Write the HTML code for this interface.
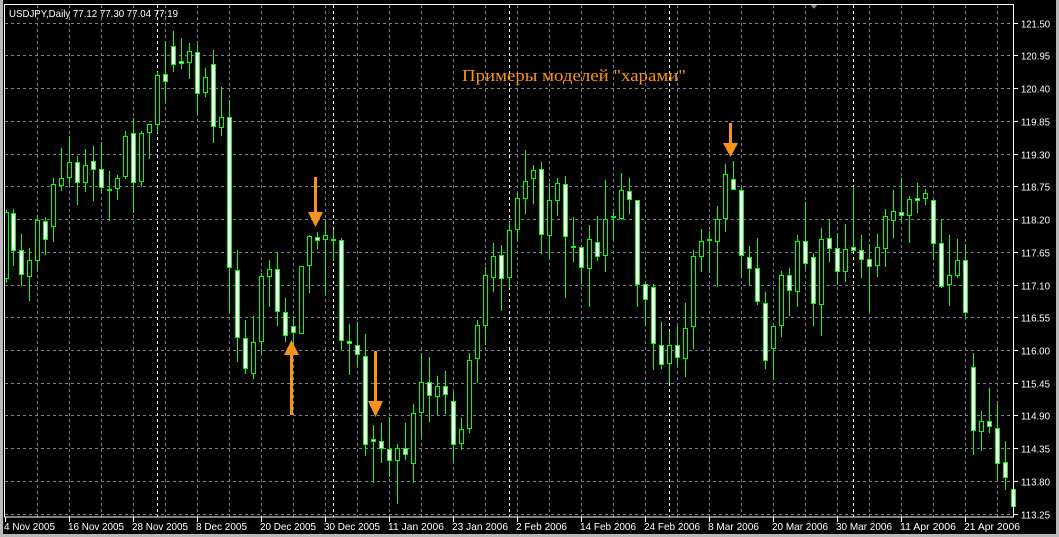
<!DOCTYPE html>
<html><head><meta charset="utf-8"><style>
html,body{margin:0;padding:0;background:#000;width:1059px;height:537px;overflow:hidden}
svg{display:block}
text{font-family:"Liberation Sans",sans-serif;font-size:10.5px;fill:#fff}
</style></head><body>
<svg id="s" width="1059" height="537" xmlns="http://www.w3.org/2000/svg" shape-rendering="crispEdges">
<rect width="1059" height="537" fill="#000"/>
<g id="grid"></g>
<g id="c"></g>
<g fill="#f7941d">
<rect x="314" y="177" width="3" height="36"/><polygon points="308,212 323,212 315.5,227"/>
<rect x="290" y="355" width="3" height="60"/><polygon points="284,355 299,355 291.5,340"/>
<rect x="374" y="351" width="3" height="50"/><polygon points="368,401 383,401 375.5,417"/>
<rect x="729" y="123" width="3" height="20"/><polygon points="723,143 738,143 730.5,157"/>
</g>
<text x="462" y="81" textLength="224" lengthAdjust="spacingAndGlyphs" style="font-family:'Liberation Serif',serif;font-size:17px;fill:#f7941d">Примеры моделей "харами"</text>
<text x="9" y="17" textLength="169" lengthAdjust="spacingAndGlyphs">USDJPY,Daily  77.12 77.30 77.04 77.19</text>
<polygon points="810,4 818,4 814,9" fill="#888"/>
<g id="ax"></g>
</svg>
<script>
var NS="http://www.w3.org/2000/svg";
function el(p,t,a,txt){var e=document.createElementNS(NS,t);for(var k in a)e.setAttribute(k,a[k]);if(txt)e.textContent=txt;p.appendChild(e);return e;}
var g=document.getElementById('grid'),c=document.getElementById('c'),ax=document.getElementById('ax');
var prices=["121.50","120.95","120.40","119.85","119.30","118.75","118.20","117.65","117.10","116.55","116.00","115.45","114.90","114.35","113.80","113.25"];
for(var k=0;k<16;k++){var y=Math.round(22.7+32.73*k)+0.5;
 el(g,'line',{x1:5,x2:1014,y1:y,y2:y,stroke:'#7a8290','stroke-dasharray':'3,3'});
 el(ax,'line',{x1:1014,x2:1018,y1:y,y2:y,stroke:'#fff'});
 el(ax,'text',{x:1021,y:y+4,textLength:29,lengthAdjust:'spacingAndGlyphs'},prices[k]);}
for(var x=37;x<1014;x+=32){el(g,'line',{x1:x+.5,x2:x+.5,y1:5,y2:517,stroke:'#7a8290','stroke-dasharray':'3,3'});}
[157,333,509,669,853,1013].forEach(function(x){el(g,'line',{x1:x+.5,x2:x+.5,y1:5,y2:517,stroke:'#fff','stroke-dasharray':'3,3'});});
el(ax,'rect',{x:4.5,y:4.5,width:1009,height:512.5,fill:'none',stroke:'#fff'});
el(ax,'rect',{x:0,y:534,width:1059,height:3,fill:'#b8b8b8'});
el(ax,'rect',{x:1056,y:0,width:3,height:537,fill:'#b8b8b8'});
el(ax,'rect',{x:0,y:0,width:3,height:537,fill:'#b8b8b8'});
var dates=["4 Nov 2005","16 Nov 2005","28 Nov 2005","8 Dec 2005","20 Dec 2005","30 Dec 2005","11 Jan 2006","23 Jan 2006","2 Feb 2006","14 Feb 2006","24 Feb 2006","8 Mar 2006","20 Mar 2006","30 Mar 2006","11 Apr 2006","21 Apr 2006"];
dates.forEach(function(d,i){var x=5+64*i;el(ax,'line',{x1:x+.5,x2:x+.5,y1:517,y2:522,stroke:'#fff'});
 var w=d.length==10?51:56;el(ax,'text',{x:x-1,y:530,textLength:w,lengthAdjust:'spacingAndGlyphs'},d);});
var D=[
[6,210,283,212,279,'b'],[13,209,266,213,251,'w'],[21,234,286,250,275,'w'],[29,248,301,260,277,'b'],[37,215,271,220,261,'b'],[45,217,255,221,240,'w'],[53,178,242,184,227,'b'],[61,148,191,178,186,'b'],[69,136,187,162,178,'b'],[77,156,205,162,183,'w'],[85,149,192,165,183,'b'],[93,146,201,161,170,'w'],[101,142,193,169,188,'w'],[109,171,221,189,190,'d'],[117,175,200,178,189,'b'],[125,131,179,136,177,'b'],[133,118,213,133,183,'w'],[141,131,187,133,182,'b'],[149,124,159,124,133,'b'],[157,72,133,75,125,'b'],[165,41,102,74,82,'w'],[173,31,72,46,65,'w'],[181,38,69,61,64,'w'],[189,43,79,51,63,'b'],[197,44,114,52,94,'w'],[205,68,97,77,93,'b'],
[213,50,143,64,127,'w'],[221,87,136,117,128,'b'],[229,100,313,117,268,'w'],[237,250,362,270,338,'w'],[245,320,374,338,369,'w'],[253,316,379,342,374,'b'],[261,273,354,276,342,'b'],[269,260,307,269,277,'b'],[277,252,326,269,312,'w'],[285,298,342,312,336,'w'],[293,316,354,326,333,'w'],[301,266,334,266,334,'b'],[309,235,293,236,266,'b'],[317,232,249,237,241,'w'],[325,220,294,235,240,'b'],[333,230,261,239,240,'d'],[341,238,350,240,341,'w'],[349,324,375,341,344,'w'],[357,322,366,345,355,'w'],[365,334,456,356,445,'w'],[373,425,483,439,442,'w'],[381,423,463,441,449,'w'],[389,417,477,449,461,'w'],[397,444,504,448,461,'b'],[405,423,460,448,455,'w'],
[413,404,483,413,464,'b'],[421,353,438,382,413,'b'],[429,357,422,382,396,'w'],[437,376,415,386,397,'b'],[445,371,414,386,395,'w'],[453,392,462,401,445,'w'],[461,418,450,429,444,'b'],[469,353,433,360,429,'b'],[477,320,383,325,359,'b'],[485,267,345,275,326,'b'],[493,243,292,256,278,'b'],[501,245,311,255,279,'w'],[509,222,288,230,278,'b'],[517,192,241,198,230,'b'],[525,150,214,181,199,'b'],[533,165,204,170,179,'b'],[541,162,254,169,235,'w'],[549,183,259,200,236,'b'],[557,178,216,183,201,'b'],[565,176,298,184,237,'w'],[573,217,262,246,248,'d'],[581,247,284,247,268,'w'],[589,225,307,239,269,'b'],[597,216,261,242,257,'w'],[605,180,272,219,256,'b'],
[613,212,240,216,218,'d'],[621,173,220,190,219,'b'],[629,178,214,191,200,'w'],[637,200,307,200,285,'w'],[645,284,326,284,300,'w'],[653,284,370,287,344,'w'],[661,322,369,345,365,'w'],[669,332,383,345,364,'b'],[677,326,366,345,358,'w'],[685,303,377,328,359,'b'],[693,250,349,256,327,'b'],[701,229,272,241,257,'b'],[709,231,273,239,241,'d'],[717,206,287,219,242,'b'],[725,164,232,174,219,'b'],[733,161,190,179,190,'w'],[741,188,278,190,256,'w'],[749,246,285,257,269,'w'],[757,238,305,268,302,'w'],[765,292,369,303,361,'w'],[773,326,380,326,349,'b'],[781,271,337,275,326,'b'],[789,268,316,275,291,'w'],[797,235,307,241,292,'b'],[805,202,269,241,264,'w'],
[813,253,326,257,304,'w'],[821,228,336,239,305,'b'],[829,219,262,238,249,'w'],[837,233,285,248,272,'w'],[845,224,282,249,272,'b'],[853,187,251,247,251,'w'],[861,235,278,250,260,'w'],[869,244,312,259,267,'w'],[877,234,277,247,266,'b'],[885,209,267,216,249,'b'],[893,190,238,211,221,'b'],[901,178,222,212,216,'w'],[909,196,243,199,216,'b'],[917,183,213,198,201,'w'],[925,189,205,193,199,'b'],[933,200,260,200,244,'w'],[941,219,288,243,287,'w'],[949,235,306,275,285,'b'],[957,239,278,260,276,'b'],[965,244,317,260,313,'w'],[973,353,455,367,431,'w'],[981,411,451,421,432,'b'],[989,388,433,421,427,'w'],[997,404,480,428,464,'w'],[1005,441,490,462,478,'w'],[1013,480,516,489,507,'w']
];
D.forEach(function(d){var x=d[0],G='#00ff00';
 el(c,'rect',{x:x,y:d[1],width:1,height:d[2]-d[1],fill:G});
 if(d[5]=='d'){el(c,'rect',{x:x-2,y:d[3],width:5,height:2,fill:G});return;}
 var h=Math.max(d[4]-d[3],3);
 el(c,'rect',{x:x-2,y:d[3],width:5,height:h,fill:G});
 el(c,'rect',{x:x-1,y:d[3]+1,width:3,height:h-2,fill:d[5]=='w'?'#fff':'#000'});
});
</script>
</body></html>
